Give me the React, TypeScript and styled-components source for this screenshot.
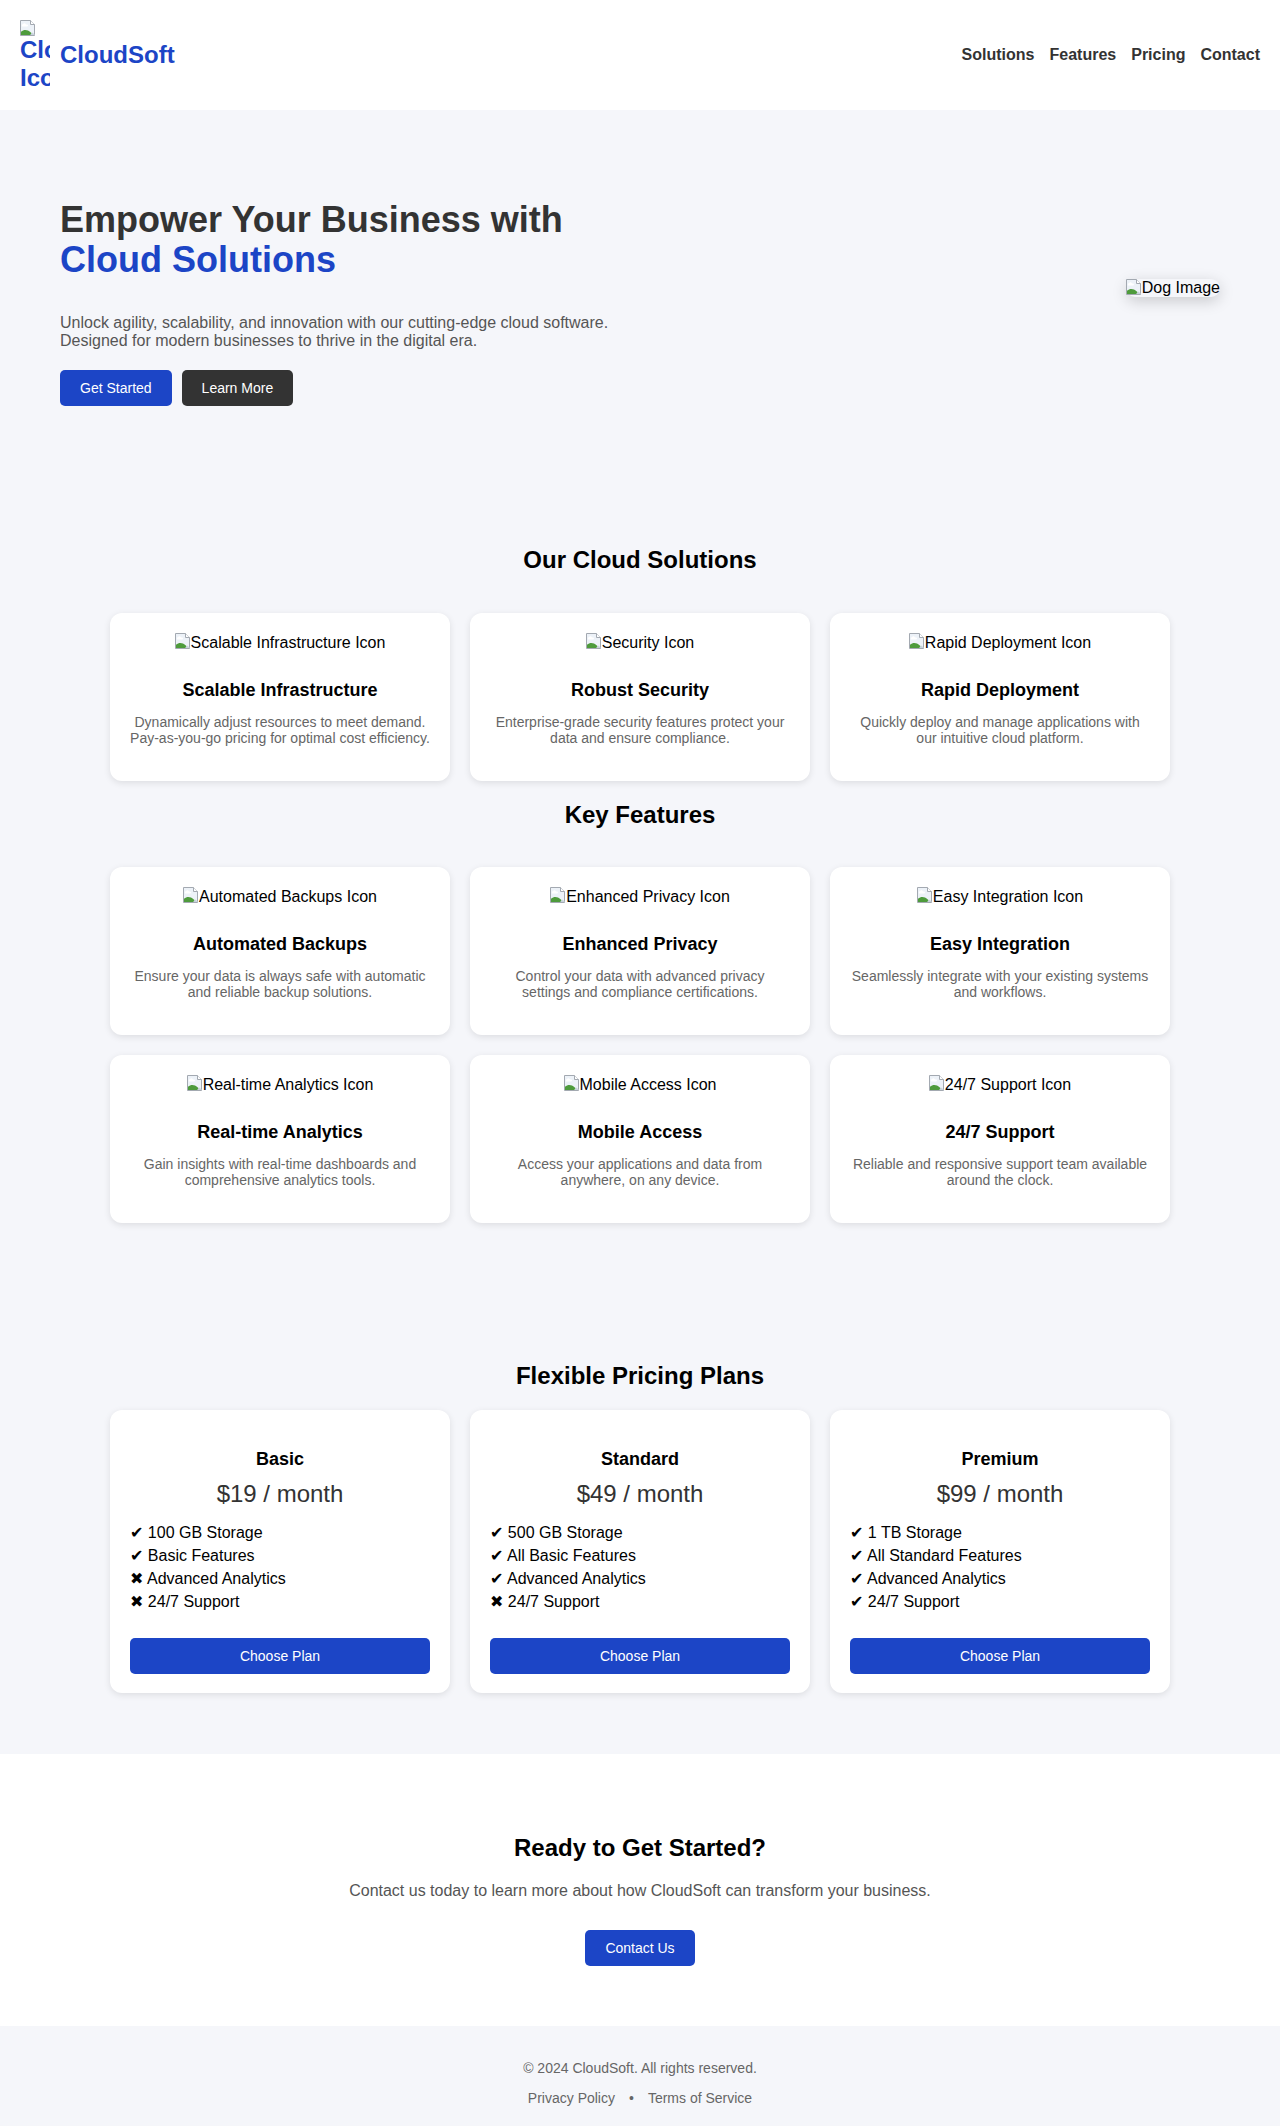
import React from "react";
import styled, { createGlobalStyle } from "styled-components";

const BLUE = "#1c45c6";
const GRAY_BG = "#f5f6fa";

const GlobalStyle = createGlobalStyle`
  * { box-sizing: border-box; }
  body {
    margin: 0;
    font-family: "Liberation Sans", Arial, "DejaVu Sans", sans-serif;
    background: #ffffff;
    color: #000;
  }
`;

const Header = styled.header`
  display: flex;
  justify-content: space-between;
  align-items: center;
  padding: 20px;
  background: #ffffff;
`;

const Brand = styled.div`
  display: flex;
  align-items: center;
  gap: 10px;
`;

const LogoFrame = styled.span`
  display: block;
  width: 30px;
  height: 70px;
  overflow: hidden;
  color: ${BLUE};
  font-size: 24px;
  font-weight: 700;
  line-height: 27.6px;
  svg { display: block; }
`;

const BrandName = styled.span`
  color: ${BLUE};
  font-size: 24px;
  font-weight: 700;
`;

const Nav = styled.nav`
  display: flex;
  gap: 15px;
`;

const NavLink = styled.a`
  color: #333;
  font-size: 16px;
  font-weight: 700;
  text-decoration: none;
`;

const Band = styled.div`
  background: ${GRAY_BG};
`;

const Hero = styled.section`
  display: flex;
  justify-content: space-between;
  align-items: center;
  padding: 60px 60px 120px;
`;

const HeroText = styled.div`
  display: flex;
  flex-direction: column;
`;

const HeroTitle = styled.h1`
  margin: 30px 0 34.8px;
  font-size: 36px;
  line-height: 1.1;
  font-weight: 700;
  color: #333;
`;

const Accent = styled.span`
  display: block;
  color: ${BLUE};
`;

const HeroLead = styled.p`
  margin: 0 0 20.8px;
  max-width: 600px;
  font-size: 16px;
  line-height: 1.1;
  color: #555;
`;

const ButtonRow = styled.div`
  display: flex;
  gap: 10px;
`;

const ActionButton = styled.a<{ $dark?: boolean }>`
  display: inline-block;
  padding: 10px 20px;
  font-size: 14px;
  line-height: 16px;
  color: #fff;
  text-decoration: none;
  border-radius: 5px;
  background: ${(p) => (p.$dark ? "#333333" : BLUE)};
`;

const BrokenImage = styled.span<{ $shadow?: boolean }>`
  display: inline-flex;
  align-items: flex-start;
  font-size: 16px;
  line-height: 18px;
  color: #000;
  border-radius: ${(p) => (p.$shadow ? "10px" : "0")};
  box-shadow: ${(p) => (p.$shadow ? "0 4px 15px rgba(0, 0, 0, 0.18)" : "none")};
  svg { display: block; flex: none; }
`;

const Section = styled.section<{ $pt?: number; $pb?: number }>`
  padding: ${(p) => p.$pt ?? 0}px 20px ${(p) => p.$pb ?? 0}px;
`;

const SectionTitle = styled.h2<{ $mb: number }>`
  margin: 20px 0 ${(p) => p.$mb}px;
  font-size: 24px;
  line-height: 27.6px;
  font-weight: 700;
  text-align: center;
  color: #000;
`;

const CardGrid = styled.div`
  display: grid;
  grid-template-columns: repeat(3, 340px);
  gap: 20px;
  justify-content: center;
`;

const Card = styled.div`
  background: #fff;
  border-radius: 12px;
  box-shadow: 0 2px 7px rgba(0, 0, 0, 0.1);
  padding: 20px 20px 35px;
  text-align: center;
`;

const IconRow = styled.div`
  display: flex;
  justify-content: center;
  height: 20px;
  line-height: 20px;
  font-size: 16px;
  color: #000;
  svg { display: block; }
`;

const CardTitle = styled.h3`
  margin: 27px 0 0;
  font-size: 18px;
  line-height: 21px;
  font-weight: 700;
  color: #000;
`;

const CardText = styled.p`
  margin: 13px 0 0;
  font-size: 14px;
  line-height: 16px;
  color: #666;
`;

const PriceCard = styled.div`
  background: #fff;
  border-radius: 12px;
  box-shadow: 0 2px 7px rgba(0, 0, 0, 0.1);
  padding: 20px 20px 19.3px;
  text-align: center;
`;

const PlanName = styled.h3`
  margin: 19px 0 0;
  font-size: 18px;
  line-height: 21px;
  font-weight: 700;
  color: #000;
`;

const Price = styled.div`
  margin-top: 9.6px;
  font-size: 24px;
  line-height: 27.6px;
  color: #333;
`;

const FeatureList = styled.ul`
  list-style: none;
  margin: 14px 0 0;
  padding: 0;
  text-align: left;
`;

const FeatureItem = styled.li`
  font-size: 16px;
  line-height: 23px;
  color: #000;
`;

const PlanButton = styled.button`
  display: block;
  width: 100%;
  margin-top: 24.8px;
  padding: 10px;
  border: none;
  border-radius: 5px;
  background: ${BLUE};
  color: #fff;
  font-family: inherit;
  font-size: 14px;
  line-height: 16px;
  cursor: pointer;
`;

const Cta = styled.section`
  background: #fff;
  padding: 80px 20px 60px;
  text-align: center;
`;

const CtaTitle = styled.h2`
  margin: 0;
  font-size: 24px;
  line-height: 27.6px;
  font-weight: 700;
  color: #000;
`;

const CtaText = styled.p`
  margin: 20.7px 0 29.6px;
  font-size: 16px;
  line-height: 18.4px;
  color: #555;
`;

const Footer = styled.footer`
  background: ${GRAY_BG};
  padding: 34px 20px 20px;
  text-align: center;
  font-size: 14px;
  line-height: 16px;
  color: #666;
`;

const Copyright = styled.p`
  margin: 0;
`;

const FooterLinks = styled.div`
  margin-top: 14px;
  display: flex;
  justify-content: center;
  gap: 14px;
`;

const FooterLink = styled.a`
  color: #666;
  text-decoration: none;
`;

const BrokenIcon = () => (
  <svg width="16" height="16" viewBox="0 0 16 16" aria-hidden="true">
    <path d="M0.5 0.5H10.5L14.5 4.5V15.5H0.5Z" fill="#edf2f8" stroke="#a3a9b1" />
    <path d="M10.5 0.5V4.5H14.5" fill="#ffffff" stroke="#a3a9b1" />
    <path d="M3 4.2a1.6 1.6 0 0 1 3 0.4h1a1 1 0 0 1 0 2H3a1.2 1.2 0 0 1 0-2.4z" fill="#ffffff" />
    <path d="M1 15V11.8C4 9.2 7.5 9.6 10.5 12.2L12.5 15Z" fill="#4e9b3c" />
    <path d="M10 15L12.5 12.5L15 15Z" fill="#c9d3dd" />
  </svg>
);

const solutions = [
  {
    icon: "Scalable Infrastructure Icon",
    title: "Scalable Infrastructure",
    text: "Dynamically adjust resources to meet demand. Pay-as-you-go pricing for optimal cost efficiency.",
  },
  {
    icon: "Security Icon",
    title: "Robust Security",
    text: "Enterprise-grade security features protect your data and ensure compliance.",
  },
  {
    icon: "Rapid Deployment Icon",
    title: "Rapid Deployment",
    text: "Quickly deploy and manage applications with our intuitive cloud platform.",
  },
];

const features = [
  {
    icon: "Automated Backups Icon",
    title: "Automated Backups",
    text: "Ensure your data is always safe with automatic and reliable backup solutions.",
  },
  {
    icon: "Enhanced Privacy Icon",
    title: "Enhanced Privacy",
    text: "Control your data with advanced privacy settings and compliance certifications.",
  },
  {
    icon: "Easy Integration Icon",
    title: "Easy Integration",
    text: "Seamlessly integrate with your existing systems and workflows.",
  },
  {
    icon: "Real-time Analytics Icon",
    title: "Real-time Analytics",
    text: "Gain insights with real-time dashboards and comprehensive analytics tools.",
  },
  {
    icon: "Mobile Access Icon",
    title: "Mobile Access",
    text: "Access your applications and data from anywhere, on any device.",
  },
  {
    icon: "24/7 Support Icon",
    title: "24/7 Support",
    text: "Reliable and responsive support team available around the clock.",
  },
];

const plans = [
  {
    name: "Basic",
    price: "$19 / month",
    items: [
      [true, "100 GB Storage"],
      [true, "Basic Features"],
      [false, "Advanced Analytics"],
      [false, "24/7 Support"],
    ] as [boolean, string][],
  },
  {
    name: "Standard",
    price: "$49 / month",
    items: [
      [true, "500 GB Storage"],
      [true, "All Basic Features"],
      [true, "Advanced Analytics"],
      [false, "24/7 Support"],
    ] as [boolean, string][],
  },
  {
    name: "Premium",
    price: "$99 / month",
    items: [
      [true, "1 TB Storage"],
      [true, "All Standard Features"],
      [true, "Advanced Analytics"],
      [true, "24/7 Support"],
    ] as [boolean, string][],
  },
];

type Info = { icon: string; title: string; text: string };

const InfoCard = ({ icon, title, text }: Info) => (
  <Card>
    <IconRow>
      <BrokenIcon />
      <span>{icon}</span>
    </IconRow>
    <CardTitle>{title}</CardTitle>
    <CardText>{text}</CardText>
  </Card>
);

export default function App() {
  return (
    <>
      <GlobalStyle />
      <Header>
        <Brand>
          <LogoFrame>
            <BrokenIcon />
            Cloud Icon
          </LogoFrame>
          <BrandName>CloudSoft</BrandName>
        </Brand>
        <Nav>
          <NavLink href="#solutions">Solutions</NavLink>
          <NavLink href="#features">Features</NavLink>
          <NavLink href="#pricing">Pricing</NavLink>
          <NavLink href="#contact">Contact</NavLink>
        </Nav>
      </Header>

      <Band>
        <Hero>
          <HeroText>
            <HeroTitle>
              Empower Your Business with
              <Accent>Cloud Solutions</Accent>
            </HeroTitle>
            <HeroLead>
              Unlock agility, scalability, and innovation with our cutting-edge cloud software.
              Designed for modern businesses to thrive in the digital era.
            </HeroLead>
            <ButtonRow>
              <ActionButton href="#pricing">Get Started</ActionButton>
              <ActionButton href="#features" $dark>
                Learn More
              </ActionButton>
            </ButtonRow>
          </HeroText>
          <BrokenImage $shadow>
            <BrokenIcon />
            <span>Dog Image</span>
          </BrokenImage>
        </Hero>

        <Section id="solutions">
          <SectionTitle $mb={39}>Our Cloud Solutions</SectionTitle>
          <CardGrid>
            {solutions.map((s) => (
              <InfoCard key={s.title} {...s} />
            ))}
          </CardGrid>
        </Section>

        <Section id="features">
          <SectionTitle $mb={39}>Key Features</SectionTitle>
          <CardGrid>
            {features.map((f) => (
              <InfoCard key={f.title} {...f} />
            ))}
          </CardGrid>
        </Section>

        <Section id="pricing" $pt={119.3} $pb={60.4}>
          <SectionTitle $mb={20}>Flexible Pricing Plans</SectionTitle>
          <CardGrid>
            {plans.map((plan) => (
              <PriceCard key={plan.name}>
                <PlanName>{plan.name}</PlanName>
                <Price>{plan.price}</Price>
                <FeatureList>
                  {plan.items.map(([ok, label]) => (
                    <FeatureItem key={label}>
                      {ok ? "✔" : "✖"} {label}
                    </FeatureItem>
                  ))}
                </FeatureList>
                <PlanButton>Choose Plan</PlanButton>
              </PriceCard>
            ))}
          </CardGrid>
        </Section>
      </Band>

      <Cta id="contact">
        <CtaTitle>Ready to Get Started?</CtaTitle>
        <CtaText>
          Contact us today to learn more about how CloudSoft can transform your business.
        </CtaText>
        <ActionButton href="#contact">Contact Us</ActionButton>
      </Cta>

      <Footer>
        <Copyright>© 2024 CloudSoft. All rights reserved.</Copyright>
        <FooterLinks>
          <FooterLink href="#privacy">Privacy Policy</FooterLink>
          <span>•</span>
          <FooterLink href="#terms">Terms of Service</FooterLink>
        </FooterLinks>
      </Footer>
    </>
  );
}
